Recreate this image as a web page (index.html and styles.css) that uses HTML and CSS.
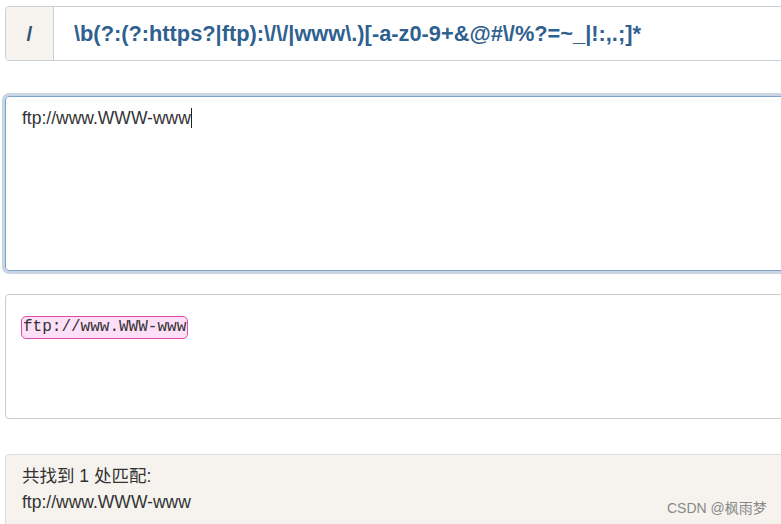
FILE: index.html
```html
<!DOCTYPE html>
<html lang="en">
<head>
    <meta charset="UTF-8">
    <title>Regex tester</title>
    <link rel="stylesheet" href="styles.css">
</head>
<body>
    <div class="page">
        <div class="regex-group">
            <span class="regex-addon">/</span>
            <div class="regex-input">\b(?:(?:https?|ftp):\/\/|www\.)[-a-z0-9+&amp;@#\/%?=~_|!:,.;]*</div>
        </div>

        <div class="source-box">ftp://www.WWW-www<span class="caret"></span></div>

        <div class="result-box">
            <span class="match">ftp://www.WWW-www</span>
        </div>

        <div class="summary">
            <div>共找到 1 处匹配:</div>
            <div>ftp://www.WWW-www</div>
            <span class="watermark">CSDN @枫雨梦</span>
        </div>
    </div>
</body>
</html>
```

FILE: styles.css
```css
body {
    margin: 0;
    padding: 0;
    background-color: #ffffff;
    font-family: "Liberation Sans", Arial, "Noto Sans CJK SC", sans-serif;
    color: #333;
    overflow: hidden;
}
.page {
    width: 820px;
    height: 524px;
    padding: 6px 0 0 5px;
}
.regex-group {
    display: flex;
    height: 53px;
    border: 1px solid #ccd0d6;
    border-radius: 4px;
}
.regex-addon {
    width: 47px;
    display: flex;
    align-items: center;
    justify-content: center;
    background-color: #f6f3ef;
    border-right: 1px solid #ccd0d6;
    border-radius: 4px 0 0 4px;
    font-size: 21px;
    font-weight: bold;
    color: #2d5577;
}
.regex-input {
    display: flex;
    align-items: center;
    padding-left: 20px;
    font-size: 21.8px;
    font-weight: bold;
    color: #2f6190;
}
.source-box {
    margin-top: 35px;
    height: 153px;
    padding: 10px 16px;
    border: 1px solid #7fa4cb;
    border-radius: 4px;
    box-shadow: 0 0 0 3px #c9d5e3;
    font-size: 17.5px;
    line-height: 22px;
    color: #333;
}
.caret {
    display: inline-block;
    width: 1px;
    height: 20px;
    background-color: #222;
    vertical-align: -4px;
}
.result-box {
    margin-top: 23px;
    height: 102px;
    padding: 21px 15px 0;
    border: 1px solid #cccccc;
    border-radius: 4px;
}
.match {
    display: inline-block;
    padding: 0 1px;
    line-height: 21px;
    background-color: #fde0f8;
    border: 1px solid #e44aa8;
    border-radius: 5px;
    font-family: "Liberation Mono", "Courier New", monospace;
    font-size: 16px;
    color: #333;
}
.summary {
    position: relative;
    margin-top: 35px;
    height: 80px;
    padding: 8px 16px 0;
    background-color: #f6f3ef;
    border: 1px solid #dcdcdc;
    border-radius: 4px;
    font-size: 17.5px;
    line-height: 26px;
    color: #333;
}
.watermark {
    position: absolute;
    left: 661px;
    top: 40px;
    font-size: 14px;
    color: #888;
}
```
